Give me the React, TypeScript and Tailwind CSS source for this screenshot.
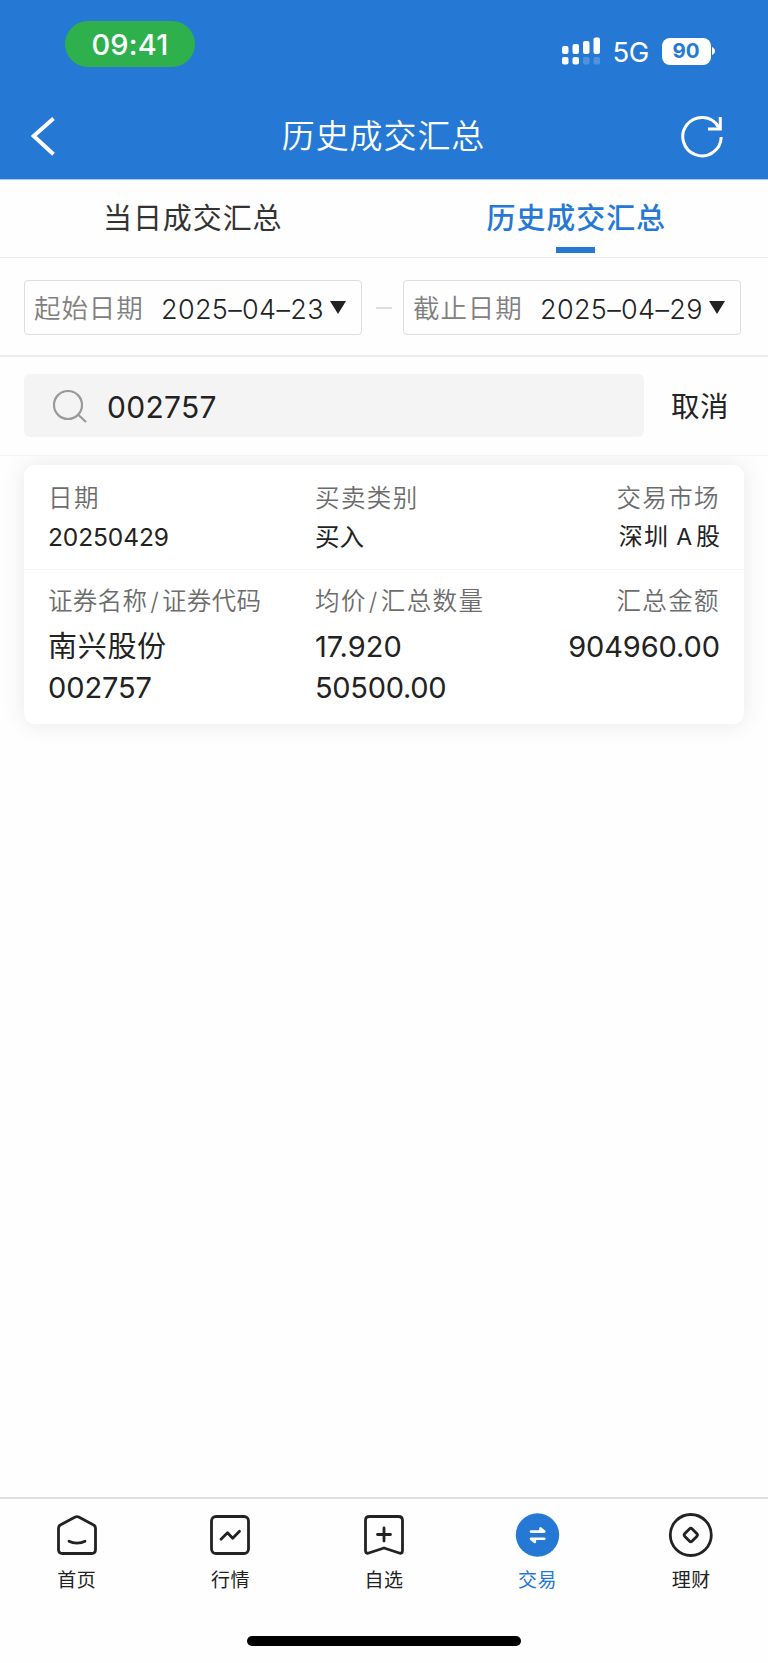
import type { ReactNode } from 'react';

const label = 'text-[24.5px] tracking-[1.4px] leading-[30px] font-[350] text-[#6c6c6c]';

function StatusBar() {
  return (
    <div className="flex h-[93px] items-start justify-between pl-[65px] pr-[52px] text-white">
      <div className="mt-[21px] flex h-[45.5px] w-[130px] items-center justify-center rounded-[23px] bg-[#2eb04c] pt-[1px] text-[29px] font-medium leading-none">
        <span className="tracking-[0.2px]">09:41</span>
      </div>
      <div className="mt-[37px] flex h-7 items-center">
        <svg width="39" height="28" viewBox="0 0 39 28" fill="#fff">
          <rect x="0" y="9" width="6.5" height="8" rx="2" />
          <rect x="10.500" y="7" width="6.5" height="10" rx="2" />
          <rect x="21" y="4" width="6.5" height="13" rx="2" />
          <rect x="31.500" y="0.5" width="6.5" height="16.5" rx="2" />
          <rect x="0" y="20" width="6.5" height="7.5" rx="2" />
          <rect x="10.500" y="20" width="6.5" height="7.5" rx="2" />
          <rect x="21" y="20" width="6.5" height="7.5" rx="2" opacity="0.2" />
          <rect x="31.500" y="20" width="6.5" height="7.5" rx="2" opacity="0.2" />
        </svg>
        <span className="ml-3 mt-[1px] w-[49px] text-[27.500px] leading-7 tracking-[-0.5px]">5G</span>
        <div className="flex h-[27px] w-[49px] items-center justify-center rounded-[8px] bg-white pt-[1px] text-[20.5px] font-bold leading-none text-[#2579d5]">
          90
        </div>
        <svg className="ml-[1.5px]" width="4" height="10" viewBox="0 0 4 10">
          <path d="M0 1c4 1.5 4 6.500 0 8z" fill="#fff" />
        </svg>
      </div>
    </div>
  );
}

function TitleBar() {
  return (
    <div className="flex h-[86px] items-center justify-between pl-[31px] pr-[44px] text-white">
      <svg width="44" height="44" viewBox="0 0 44 44" fill="none" stroke="#fff" strokeWidth="3.9">
        <path d="M22.500 4.500 2.700 22 22.500 40.200" />
      </svg>
      <h1 className="ml-[12px] text-[33px] font-[350] leading-[44px] tracking-[0.9px]">历史成交汇总</h1>
      <svg width="44" height="44" viewBox="0 0 44 44" fill="none" stroke="#fff" strokeWidth="3">
        <path d="M41.200 23a19.200 19.200 0 1 1-2.900-10.500" />
        <path d="M40.300 3v11.900H28" />
        <path d="m36.500 10.500 3.500 4" />
      </svg>
    </div>
  );
}

function DateField({ name, value }: { name: string; value: string }) {
  return (
    <div className="flex h-[55px] w-[338px] items-center rounded-[4px] border border-[#dedede] pl-[9px]">
      <span className="w-[127px] text-[26.500px] font-[350] leading-[36px] tracking-[0.9px] text-[#808080]">{name}</span>
      <span className="mt-[4px] w-[169px] whitespace-nowrap text-[27px] font-[350] leading-[36px] tracking-[0.350px] text-[#222]">{value}</span>
      <svg className="mb-[1px]" width="16" height="13" viewBox="0 0 16 13">
        <path d="M0 0h16L8 13z" fill="#222" />
      </svg>
    </div>
  );
}

function NavItem({ text, active, children }: { text: string; active?: boolean; children: ReactNode }) {
  return (
    <div className={`flex flex-1 flex-col items-center ${active ? 'text-[#2579d5]' : 'text-[#222]'}`}>
      <svg width="46" height="46" viewBox="0 0 46 46" fill="none" stroke="currentColor" strokeWidth="2.800" strokeLinecap="round" strokeLinejoin="round">
        {children}
      </svg>
      <span className="mt-[11px] text-[19px] leading-6 tracking-[0.5px]">{text}</span>
    </div>
  );
}

export default function App() {
  return (
    <div className="flex h-[1663px] w-[768px] flex-col overflow-hidden bg-[#fefefe] font-['Inter','Noto_Sans_CJK_SC',sans-serif] text-[#222]">
      <header className="h-[179px] shrink-0 bg-[#2579d5]">
        <StatusBar />
        <TitleBar />
      </header>

      <div className="flex h-[79px] shrink-0 border-b border-t border-b-[#ebebeb] border-t-[#a8c9ee] text-[29px] leading-[40px] tracking-[0.9px]">
        <div className="flex flex-1 justify-center pl-px pt-[19px] text-[#333]">当日成交汇总</div>
        <div className="flex flex-1 flex-col items-center pt-[19px] font-medium text-[#2579d5]">
          <span>历史成交汇总</span>
          <span className="mr-px mt-[8px] h-[6px] w-[39px] bg-[#2579d5]" />
        </div>
      </div>

      <div className="flex h-[99px] shrink-0 items-start border-b-2 border-[#ebebeb] pl-6 pt-[22px]">
        <DateField name="起始日期" value="2025–04–23" />
        <span className="ml-[14px] mr-[11px] mt-[27px] h-[2px] w-[16px] bg-[#ddd]" />
        <DateField name="截止日期" value="2025–04–29" />
      </div>

      <div className="flex h-[98px] shrink-0 items-start pl-6 pt-[17px]">
        <div className="flex h-[63px] w-[620px] items-center rounded-[6px] bg-[#f4f4f4] pl-[28px]">
          <svg width="36" height="36" viewBox="0 0 36 36" fill="none" stroke="#999" strokeWidth="2.200">
            <circle cx="16" cy="17" r="14" />
            <path d="M26.500 27 34 34" />
          </svg>
          <span className="ml-[19px] mt-[2px] text-[30px] leading-none tracking-[0.300px]">002757</span>
        </div>
        <span className="ml-[27px] mt-[13px] text-[28.500px] leading-[40px] tracking-[0.500px]">取消</span>
      </div>

      <main className="flex-1 overflow-hidden border-t border-[#f2f2f2] px-6 pt-[9px]">
        <section className="h-[259px] rounded-[11px] bg-white shadow-[0_0_24px_rgba(0,0,0,0.09)]">
          <div className="grid h-[105px] grid-cols-[267px_1fr_auto] border-b border-[#f5f5f5] px-[24px] pt-[18px]">
            <div>
              <div className={label}>日期</div>
              <div className="mt-[9px] text-[24.500px] leading-[30px] tracking-[-0.1px]">20250429</div>
            </div>
            <div>
              <div className={label}>买卖类别</div>
              <div className="mt-[9px] text-[24.500px] leading-[30px]">买入</div>
            </div>
            <div className="text-right">
              <div className={label}>交易市场</div>
              <div className="mt-[9px] text-[24px] leading-[30px]">
                <span className="tracking-[1.200px]">深圳</span>
                <span className="ml-[7px] mr-[4px] text-[23px]">A</span>股
              </div>
            </div>
          </div>
          <div className="grid grid-cols-[267px_1fr_auto] px-[24px] pt-[16px]">
            <div>
              <div className={label}>
                <span className="tracking-[0.3px]">
                  证券名称<span className="mx-[3px]">/</span>证券代码
                </span>
              </div>
              <div className="mt-[10px] text-[29px] leading-[41px]">
                <div className="tracking-[0.700px]">南兴股份</div>
                <div className="tracking-[-0.100px]">002757</div>
              </div>
            </div>
            <div>
              <div className={label}>
                均价<span className="mx-[2px]">/</span>汇总数量
              </div>
              <div className="mt-[10px] text-[29px] leading-[41px]">
                <div>17.920</div>
                <div className="tracking-[-0.300px]">50500.00</div>
              </div>
            </div>
            <div className="text-right">
              <div className={label}>汇总金额</div>
              <div className="mt-[10px] text-[29px] leading-[41px] tracking-[-0.100px]">904960.00</div>
            </div>
          </div>
        </section>
      </main>

      <nav className="flex h-[139px] shrink-0 border-t-2 border-[#e0e0e0] pt-[13px]">
        <NavItem text="首页">
          <path d="M4.500 16.200c0-1.700.8-2.800 2.200-3.500l14.500-7.600c1.100-.6 2.400-.6 3.500 0l14.500 7.600c1.500.7 2.300 1.800 2.300 3.500v21.300c0 2.500-1.500 4-4 4H8.500c-2.500 0-4-1.500-4-4z" />
          <path d="M15 29.300c4.500 2.500 11.500 2.500 16 0" />
        </NavItem>
        <NavItem text="行情">
          <rect x="4.500" y="4.500" width="37" height="37" rx="4.500" />
          <path d="m14 27.300 6.500-6.500 5.200 5.500 6.800-7" />
        </NavItem>
        <NavItem text="自选">
          <path d="M8.500 4.500h29c2.500 0 4 1.500 4 4v30c0 2.200-1.200 3.200-3.300 2.500L23 36 7.800 41c-2.100.7-3.300-.3-3.300-2.500v-30c0-2.500 1.500-4 4-4z" />
          <path d="M23 16v13M16.500 22.500h13" />
        </NavItem>
        <NavItem text="交易" active>
          <circle cx="22.500" cy="23" r="21.700" fill="#2579d5" stroke="none" />
          <path d="M16 19.600h13.300l-3.800-3.200v3.200M29.300 26.700H16l3.800 3.200v-3.200" fill="#fff" stroke="#fff" strokeWidth="2.600" />
        </NavItem>
        <NavItem text="理财">
          <circle cx="22.800" cy="23" r="20.500" />
          <rect x="17.600" y="17.800" width="10.400" height="10.400" rx="2" transform="rotate(45 22.800 23)" />
        </NavItem>
      </nav>
      <footer className="flex h-[27px] shrink-0 justify-center">
        <div className="h-[10px] w-[274px] rounded-full bg-black" />
      </footer>
    </div>
  );
}
